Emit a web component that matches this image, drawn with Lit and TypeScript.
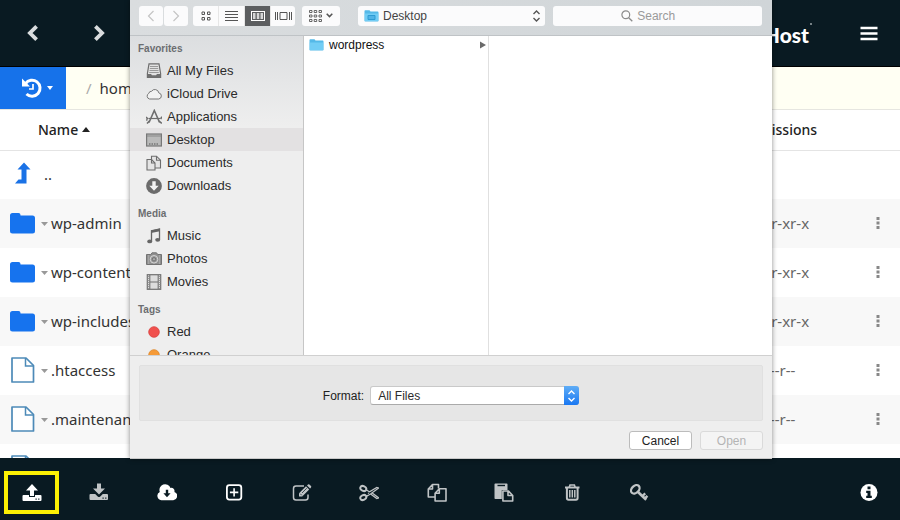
import { LitElement, html, svg, css, nothing } from "lit";
import { customElement, property, state } from "lit/decorators.js";
import { classMap } from "lit/directives/class-map.js";

const chevronLeft = svg`<path d="M8.800 2 L2.700 8 L8.800 14" fill="none" stroke="currentColor" stroke-width="3.500"/>`;
const chevronRight = svg`<path d="M2.200 2 L8.300 8 L2.200 14" fill="none" stroke="currentColor" stroke-width="3.500"/>`;

/* Bottom bar icons, drawn on a 20 x 20 grid */
const actionIcons: Record<string, unknown> = {
  upload: svg`<path fill="currentColor" d="M10 1 L16 7.500 H12 V13 H8 V7.500 H4 Z"/>
    <path fill="currentColor" d="M1.500 12 H7 V13.500 Q7 14 7.500 14 H12.500 Q13 14 13 13.500 V12 H18.500 Q19.500 12 19.500 13 V17 Q19.500 18 18.500 18 H1.500 Q.5 18 .5 17 V13 Q.5 12 1.500 12 Z"/>
    <path fill="#091a22" d="M13.500 15.500h1.200v1.200h-1.200zM16.200 15.500h1.200v1.200h-1.200z"/>`,
  download: svg`<path fill="currentColor" d="M8 .5 H12 V5.500 H16 L10 11.500 L4 5.500 H8 Z"/>
    <path fill="currentColor" d="M1.500 11 H6.200 L9 13.700 Q10 14.500 11 13.700 L13.800 11 H18 Q19 11 19 12 V16 Q19 17 18 17 H1.500 Q.5 17 .5 16 V12 Q.5 11 1.500 11 Z"/>
    <path fill="#091a22" d="M13.500 14.500h1.200v1.200h-1.200zM16.200 14.500h1.200v1.200h-1.200z"/>`,
  cloud: svg`<path fill="currentColor" d="M4.300 17.200 A4.400 4.400 0 0 1 2.800 8.900 A5.700 5.700 0 0 1 13.500 4.900 A3.200 3.200 0 0 1 17.400 8.900 A4.300 4.300 0 0 1 16.300 17.200 Z"/>
    <path fill="#091a22" d="M8.800 6.700 H11.200 V10.300 H13.600 L10 14.200 L6.400 10.300 H8.800 Z"/>`,
  add: svg`<rect x="2.900" y="2.200" width="14.400" height="14.400" rx="2.500" fill="none" stroke="currentColor" stroke-width="1.800"/>
    <path d="M10.100 5.200 V13.600 M5.900 9.400 H14.300" stroke="currentColor" stroke-width="1.600"/>`,
  edit: svg`<path d="M16 11.500 V14.500 Q16 17 13.500 17 H4 Q1.500 17 1.500 14.500 V5.500 Q1.500 3 4 3 H12" fill="none" stroke="currentColor" stroke-width="1.500"/>
    <path fill="currentColor" d="M7 13.500 V10.300 L14 3.300 L17.200 6.500 L10.200 13.500 Z M15 2.400 L16 1.500 Q16.700 .9 17.400 1.500 L19 3.100 Q19.600 3.800 19 4.500 L18.100 5.500 Z"/>
    <path d="M8.200 10.700 L9.800 12.300 M10 10 L14.800 5.200" stroke="#091a22" stroke-width=".7"/>`,
  cut: svg`<g fill="none" stroke="currentColor"><ellipse cx="4.300" cy="5.500" rx="3.100" ry="2.300" transform="rotate(25 4.300 5.500)" stroke-width="2"/>
    <ellipse cx="4.300" cy="14.500" rx="3.100" ry="2.300" transform="rotate(-25 4.300 14.500)" stroke-width="2"/>
    <path stroke-width="1.200" d="M7 6.700 L10.500 8.800 L17.800 4.500 L19.700 5.100 L11.500 10.900 L7.300 13.400 M7 13 L8.500 12.200 M9 9.900 L10 10.500 M11.600 10.900 L17.800 15.500 L19.700 14.900 L12.500 9.400"/></g>`,
  copy: svg`<g fill="none" stroke="currentColor" stroke-width="1.600" stroke-linejoin="round"><path d="M8 14 H1.300 V6 L5.500 1.500 H11.500 V5.500 M1.300 6 H5.500 V1.500"/>
    <path d="M12.300 5.700 H19 V18 H8.100 V10.200 Z M8.100 10.200 H12.300 V5.700"/></g>`,
  paste: svg`<path fill="currentColor" d="M1.300 .5 H12.700 Q13.500 .5 13.500 1.300 V7 H7.800 V16 H1.300 Q.5 16 .5 15.200 V1.300 Q.5 .5 1.300 .5 Z"/><path fill="#091a22" d="M3.500 1.800 H11 V3.200 H3.500 Z"/>
    <path d="M8.900 8 H14.500 L18.700 12.500 V18 H8.900 Z M14 8 V12.500 H18.600" fill="#091a22" stroke="currentColor" stroke-width="1.600" stroke-linejoin="round"/>`,
  trash: svg`<g fill="none" stroke="currentColor"><path stroke-width="2" d="M3 4.500 H17.500"/><path stroke-width="1.600" d="M7.200 4.500 L8 2 H12.400 L13.200 4.500"/>
    <path stroke-width="2" d="M4.900 5 V15 Q4.900 16.700 6.500 16.700 H14 Q15.600 16.700 15.600 15 V5"/><path stroke-width="1.500" d="M7.800 7 V14.500 M10.300 7 V14.500 M12.800 7 V14.500"/></g>`,
  key: svg`<g fill="none" stroke="currentColor"><ellipse cx="6.300" cy="6.300" rx="4.900" ry="3.500" transform="rotate(-45 6.300 6.300)" stroke-width="2.300"/>
    <path stroke-width="2.600" d="M9 9 L17.200 16.800"/><path stroke-width="2.400" d="M13.500 13 L16.200 10.400 M16 15.300 L18.400 12.900"/></g>`,
  info: svg`<circle cx="10" cy="9.500" r="8.500" fill="currentColor"/><path fill="#091a22" d="M8.500 3.600 H11.500 V6.200 H8.500 Z M7.200 7.800 H11.500 V12.800 H12.800 V14.900 H7.200 V12.800 H8.500 V9.900 H7.200 Z"/>`,
};

/* Sidebar icons, drawn on a 16 x 16 grid */
const placeIcons: Record<string, unknown> = {
  files: svg`<path d="M3 .8 H13 L14.600 10.500 V14.500 H1.400 V10.500 Z" fill="#e2e2e2" stroke="#6d6d6d" stroke-width="1.200"/>
    <path d="M4 3.500 H12 M3.800 5.500 H12.200 M3.500 7.500 H12.500 M3.200 9.500 H12.800" stroke="#999" stroke-width="1"/><path d="M1.500 11 H5 L6 12.200 H10 L11 11 H14.500 V14.500 H1.500 Z" fill="#707070"/>`,
  cloud: svg`<path d="M3.500 13 A3 3 0 0 1 2.800 7.400 A2.600 2.600 0 0 1 5.500 5.300 A4 4 0 0 1 12.800 6.900 A3.100 3.100 0 0 1 12.800 13 Z" fill="#f2f2f2" stroke="#777" stroke-width="1"/>`,
  apps: svg`<g fill="none" stroke="#6d6d6d" stroke-width="1.600"><path d="M3 13.500 L8.300 1.500 L13.600 13.500"/><path d="M2.500 9.500 H14" stroke-width="1.200"/><path d="M0 8 L2 10 M0 11 L1.600 10.800 M1 14.500 L3.500 12 M14.600 10 L16 7.700 M15.800 14.500 L13 12"/></g>`,
  desktop: svg`<rect x=".6" y="2" width="14.800" height="12" fill="#bababa" stroke="#777" stroke-width="1.200"/><path d="M1 4 H15" stroke="#888"/><path d="M3 12 H13" stroke="#777" stroke-width="1.500" stroke-dasharray="1.500 1"/>`,
  documents: svg`<g fill="#e4e4e4" stroke="#6d6d6d" stroke-width="1.100"><path d="M5.500 11.500 V1.200 H10.500 L14.500 5.200 V13 H9"/><path d="M1 4.500 H5.500 L9 8 V15 H1 Z"/><path fill="none" d="M5.500 4.500 V8 H9 M10.500 1.200 V5.200 H14.500"/></g>`,
  downloads: svg`<circle cx="8" cy="8" r="7.900" fill="#6b6b6b"/><path fill="#f4f4f4" d="M6.300 3.200 H9.700 V7.800 H12.700 L8 12.800 L3.300 7.800 H6.300 Z"/>`,
  music: svg`<path d="M5.500 13 V2.800 L13.500 1 V11.500" fill="none" stroke="#666" stroke-width="1.300"/><path d="M5 2.400 L14 .5 V3.200 L5 5 Z" fill="#666"/><ellipse cx="3.700" cy="13.400" rx="2.500" ry="1.900" fill="#666"/><ellipse cx="11.700" cy="11.800" rx="2.500" ry="1.900" fill="#666"/>`,
  photos: svg`<path d="M.5 3.500 H4.800 L6 1.800 H10.500 L11.700 3.500 H15.500 V13.500 H.5 Z" fill="#8f8f8f" stroke="#737373"/><circle cx="8" cy="8.300" r="3.800" fill="#999" stroke="#ddd" stroke-width=".9"/><circle cx="8" cy="8.300" r="1.700" fill="#aaa" stroke="#666" stroke-width=".8"/><path d="M2.700 4V13M13.400 4V13" stroke="#aaa"/>`,
  movies: svg`<rect x="1.300" y=".7" width="13.400" height="14.600" fill="#ddd" stroke="#707070" stroke-width="1.200"/><path d="M3.800 1 V15 M12.200 1 V15 M4 8 H12" stroke="#707070" stroke-width="1.100"/><path d="M2.400 2 V15 M13.600 2 V15" stroke="#999" stroke-width="1.200" stroke-dasharray="1 1"/>`,
  red: svg`<circle cx="8" cy="8" r="5.300" fill="#f0504d" stroke="#d94340" stroke-width=".8"/>`,
  orange: svg`<circle cx="8" cy="8" r="5.300" fill="#f59a37" stroke="#dd8526" stroke-width=".8"/>`,
};

const skyFolder = svg`<path d="M.5 2 Q.5 1.200 1.300 1.200 H5.500 L6.500 2.600 H13.700 Q14.500 2.600 14.500 3.400 V11.800 Q14.500 12.500 13.700 12.500 H1.300 Q.5 12.500 .5 11.800 Z" fill="#55b9e8"/><path d="M.8 4.500 H14.200 V12 H.8 Z" fill="#72cdf5"/>`;

interface Entry { name: string; kind: "up" | "folder" | "file"; mode: string; }

const entries: Entry[] = [
  { name: "..", kind: "up", mode: "" },
  { name: "wp-admin", kind: "folder", mode: "drwxr-xr-x" },
  { name: "wp-content", kind: "folder", mode: "drwxr-xr-x" },
  { name: "wp-includes", kind: "folder", mode: "drwxr-xr-x" },
  { name: ".htaccess", kind: "file", mode: "-rw-r--r--" },
  { name: ".maintenance", kind: "file", mode: "-rw-r--r--" },
  { name: "", kind: "file", mode: "" },
];

const places = [
  { title: "Favorites", items: [["files", "All My Files"], ["cloud", "iCloud Drive"], ["apps", "Applications"], ["desktop", "Desktop"], ["documents", "Documents"], ["downloads", "Downloads"]] },
  { title: "Media", items: [["music", "Music"], ["photos", "Photos"], ["movies", "Movies"]] },
  { title: "Tags", items: [["red", "Red"], ["orange", "Orange"]] },
];

const actions: [string, string, boolean][] = [
  ["upload", "Upload", true], ["download", "Download", false], ["cloud", "Fetch from cloud", true],
  ["add", "New", true], ["edit", "Edit", false], ["cut", "Cut", false], ["copy", "Copy", false],
  ["paste", "Paste", false], ["trash", "Delete", false], ["key", "Change permissions", false],
];

const reset = css`
  * { box-sizing: border-box; }
  button, select, input { font: inherit; color: inherit; margin: 0; padding: 0; border: 0; background: none; border-radius: 0; }
  button { display: flex; align-items: center; justify-content: center; }
  svg { display: block; flex: none; }
  ul { list-style: none; margin: 0; padding: 0; }
`;

@customElement("file-table")
class FileTable extends LitElement {
  static styles = [reset, css`
    :host { display: block; font: 15px/18px "Noto Sans", sans-serif; color: #333; background: #fff; }
    table { width: 100%; table-layout: fixed; border-collapse: collapse; }
    th { height: 40px; padding: 0; text-align: left; font-size: 14px; font-weight: 500; color: #222; border-bottom: 1px solid #e4e4e4; }
    .sort { padding-left: 38px; gap: 4px; }
    .mode-col { width: 128px; }
    .menu-col { width: 36px; }
    td { height: 49px; padding: 0 0 2px; white-space: nowrap; }
    tr:nth-child(even) td { background: #f8f8f8; }
    .mode { color: #666; }
    .entry { display: flex; align-items: center; padding-left: 10px; }
    .entry a { color: inherit; text-decoration: none; }
    .caret { width: 15px; height: 20px; padding: 2px 0 0 2px; }
    .parent { padding-left: 8px; }
    .more { width: 28px; height: 28px; }
  `];

  private icon(kind: Entry["kind"]) {
    if (kind === "up")
      return html`<svg width="26" height="26" viewBox="0 0 26 26"><path fill="#1a72e6" d="M14 1.500 L20.500 8.500 H16.500 V22.500 H5 L8.500 18.500 H11.500 V8.500 H7.500 Z"/></svg>`;
    if (kind === "folder")
      return html`<svg width="26" height="26" viewBox="0 0 26 26"><path fill="#1673ee" d="M2.500 3 H8.500 Q10.500 3 10.500 5 V5.500 H22.500 Q25 5.500 25 8 V21 Q25 23.500 22.500 23.500 H2.500 Q0 23.500 0 21 V5.500 Q0 3 2.500 3 Z"/></svg>`;
    return html`<svg width="26" height="26" viewBox="0 0 26 26"><path fill="#fff" stroke="#4d8ab8" stroke-width="1.700" stroke-linejoin="round" d="M2 1 H16 L23.500 8.500 V25 H2 Z"/><path fill="none" stroke="#4d8ab8" stroke-width="1.500" d="M15.500 1 V9 H23.500"/></svg>`;
  }

  render() {
    return html`<table>
      <colgroup><col><col class="mode-col"><col class="menu-col"></colgroup>
      <thead><tr>
        <th scope="col"><button class="sort">Name
          <svg width="8" height="5" viewBox="0 0 8 5"><path fill="#222" d="M4 0 L8 5 H0 Z"/></svg></button></th>
        <th scope="col">Permissions</th>
        <th scope="col"></th>
      </tr></thead>
      <tbody>${entries.map((e) => html`<tr>
        <td><div class="entry">${this.icon(e.kind)}
          ${e.name && e.kind !== "up" ? html`<button class="caret" aria-label="Options"><svg width="7" height="4" viewBox="0 0 7 4"><path fill="#999" d="M0 0 H7 L3.500 4 Z"/></svg></button>` : nothing}
          <a class=${classMap({ parent: e.kind === "up" })} href="#">${e.name}</a>
        </div></td>
        <td class="mode">${e.mode}</td>
        <td>${e.mode ? html`<button class="more" aria-label="More"><svg width="4" height="14" viewBox="0 0 4 14"><path fill="#888" d="M.5 1h3v3h-3zM.5 5.500h3v3h-3zM.5 10h3v3h-3z"/></svg></button>` : nothing}</td>
      </tr>`)}</tbody>
    </table>`;
  }
}

@customElement("open-dialog")
class OpenDialog extends LitElement {
  @state() private place = "Desktop";

  static styles = [reset, css`
    :host { display: flex; flex-direction: column; font: 12px/16px "Liberation Sans", Arial, sans-serif; color: #2b2b2b; background: #eeeeee; box-shadow: 0 0 5px rgba(0, 0, 0, .45); border-bottom: 1px solid #c8c8c8; }
    .tools { flex: none; display: flex; align-items: center; height: 36px; padding: 0 10px 4px 9px; background: linear-gradient(90deg, #dadddf, #d0d5d8); border-bottom: 1px solid #bfc3c6; }
    .tools button, .where, .search { height: 20px; background: #fbfbfc; border-radius: 3px; }
    .history { display: flex; gap: 1px; color: #c4c4c4; }
    .history button { width: 24px; }
    .views { display: flex; margin-left: 5px; border-radius: 3px; overflow: hidden; color: #555; }
    .views button { width: 26px; border-radius: 0; border-right: 1px solid #e6e6e6; }
    .views button:last-child { width: 24px; border: 0; }
    .views button.on { background: #5c5e60; color: #fff; }
    .tools .arrange { margin-left: 7px; width: 38px; gap: 4px; color: #555; }
    .where { position: relative; display: flex; align-items: center; margin-left: 18px; flex: 187 1 0; }
    .where select { appearance: none; width: 100%; height: 20px; padding-left: 25px; color: #444; }
    .where svg { position: absolute; pointer-events: none; }
    .where .icon { left: 6px; }
    .where .arrows { right: 4px; color: #555; }
    .search { flex: 210 1 0; margin-left: 8px; display: flex; align-items: center; justify-content: center; gap: 4px; color: #8b8b8b; }
    .search input { width: 60px; outline: 0; }
    .search input::placeholder { color: #9a9a9a; opacity: 1; }
    .search svg { margin-left: 4px; }
    .body { flex: 1; min-height: 0; display: flex; background: #fff; border-bottom: 1px solid #d0d0d0; overflow: hidden; }
    .places { flex: none; width: 174px; padding-top: 3px; overflow: hidden; border-right: 1px solid #c6c6c6; background: linear-gradient(#dcdee0, #eeeeee 90px); display: flex; flex-direction: column; gap: 7px; }
    h2 { margin: 0; padding-left: 8px; font-size: 10px; line-height: 20px; color: #6b6d70; }
    .places button { width: 100%; height: 23px; padding-left: 16px; justify-content: flex-start; gap: 5px; }
    .places .label { font-size: 13px; }
    .places button.on { background: #e3e1e2; }
    .column { flex: none; width: 185px; border-right: 1px solid #e0e0e0; }
    .column button { width: 100%; height: 18px; padding: 0 2px 0 5px; gap: 5px; color: #111; }
    .column .label { flex: 1; text-align: left; }
    .options { flex: none; margin: 9px 9px 0; height: 56px; display: flex; align-items: center; justify-content: center; gap: 6px; background: #e6e6e6; border: 1px solid #e0e0e0; border-radius: 2px; padding-top: 5px; }
    .options label { color: #222; }
    .format { position: relative; width: 209px; height: 19px; }
    .format select { display: block; appearance: none; width: 100%; height: 19px; padding-left: 7px; background: #fff; border: 1px solid #c9c9c9; border-bottom-color: #aaa; border-radius: 3px; }
    .format .knob { position: absolute; right: 0; top: 0; width: 15px; height: 19px; display: grid; place-items: center; background: linear-gradient(#5fadf6, #1a78f2); border-radius: 0 3px 3px 0; pointer-events: none; }
    .buttons { flex: none; display: flex; justify-content: flex-end; gap: 8px; padding: 10px 9px 8px; }
    .buttons button { width: 63px; height: 19px; background: #fff; border: 1px solid #bcbcbc; border-radius: 3px; color: #222; }
    .buttons button:disabled { background: #f4f4f4; border-color: #dadada; color: #b4b4b4; }
  `];

  render() {
    const arrows = svg`<path d="M1.500 4 L4.500 1 L7.500 4 M1.500 8 L4.500 11 L7.500 8" fill="none" stroke="currentColor" stroke-width="1.400"/>`;
    return html`
      <div class="tools">
        <div class="history">
          <button aria-label="Back"><svg width="8" height="12" viewBox="0 0 8 12"><path d="M6.500 1 L1.500 6 L6.500 11" fill="none" stroke="currentColor" stroke-width="1.200"/></svg></button>
          <button aria-label="Forward"><svg width="8" height="12" viewBox="0 0 8 12"><path d="M1.500 1 L6.500 6 L1.500 11" fill="none" stroke="currentColor" stroke-width="1.200"/></svg></button>
        </div>
        <div class="views">
          <button aria-label="Icons"><svg width="10" height="10" viewBox="0 0 10 10"><path d="M1 1h2.500v2.500H1zM6.500 1H9v2.500H6.500zM1 6.500h2.500V9H1zM6.500 6.500H9V9H6.500z" fill="none" stroke="currentColor"/></svg></button>
          <button aria-label="List"><svg width="13" height="10" viewBox="0 0 13 10"><path d="M0 .5H13M0 3.500H13M0 6.500H13M0 9.500H13" stroke="currentColor"/></svg></button>
          <button class="on" aria-label="Columns"><svg width="14" height="10" viewBox="0 0 14 10"><rect x=".5" y=".5" width="13" height="9" fill="none" stroke="currentColor"/><path d="M2 2h2.500v6H2zM5.800 2h2.500v6H5.800zM9.500 2H12v6H9.500z" fill="currentColor" opacity=".75"/></svg></button>
          <button aria-label="Cover flow"><svg width="17" height="10" viewBox="0 0 17 10"><path d="M.5 1V9M2.500 1V9M14.500 1V9M16.500 1V9M5 1.500H12V8.500H5z" fill="none" stroke="currentColor"/></svg></button>
        </div>
        <button class="arrange" aria-label="Arrange">
          <svg width="13" height="12" viewBox="0 0 13 12"><path d="M.5 .5h2.500v2h-2.500zM5.200 .5h2.500v2h-2.500zM10 .5h2.500v2h-2.500zM.5 5h2.500v2h-2.500zM5.200 5h2.500v2h-2.500zM10 5h2.500v2h-2.500zM.5 9.500h2.500v2h-2.500zM5.200 9.500h2.500v2h-2.500zM10 9.500h2.500v2h-2.500z" fill="none" stroke="currentColor" stroke-width=".9"/></svg>
          <svg width="7" height="5" viewBox="0 0 7 5"><path d="M.7 .7 L3.500 3.600 L6.300 .7" fill="none" stroke="currentColor" stroke-width="1.500"/></svg>
        </button>
        <div class="where">
          <svg class="icon" width="15" height="14" viewBox="0 0 15 14">${skyFolder}<path d="M4 6.500H11V10.500H4z" fill="#4fb3e6" stroke="#2e9bd3"/></svg>
          <select aria-label="Location"><option>Desktop</option></select>
          <svg class="arrows" width="9" height="12" viewBox="0 0 9 12">${arrows}</svg>
        </div>
        <label class="search">
          <svg width="12" height="12" viewBox="0 0 12 12"><circle cx="4.800" cy="4.800" r="3.900" fill="none" stroke="currentColor" stroke-width="1.200"/><path d="M7.700 7.700 L11.300 11.300" stroke="currentColor" stroke-width="1.300"/></svg>
          <input type="search" placeholder="Search" aria-label="Search">
        </label>
      </div>
      <div class="body">
        <nav class="places">${places.map((g) => html`<section>
          <h2>${g.title}</h2>
          <ul>${g.items.map(([icon, name]) => html`<li><button class=${classMap({ on: name === this.place })} @click=${() => (this.place = name)}>
            <svg width="16" height="16" viewBox="0 0 16 16">${placeIcons[icon]}</svg><span class="label">${name}</span></button></li>`)}</ul>
        </section>`)}</nav>
        <div class="column"><button>
          <svg width="15" height="14" viewBox="0 0 15 14">${skyFolder}</svg><span class="label">wordpress</span>
          <svg width="6" height="8" viewBox="0 0 6 8"><path d="M0 .5 L6 4 L0 7.500 Z" fill="#6a6a6a"/></svg>
        </button></div>
      </div>
      <div class="options">
        <label for="format">Format:</label>
        <div class="format"><select id="format"><option>All Files</option></select>
          <span class="knob"><svg width="9" height="12" viewBox="0 0 9 12" color="#fff">${arrows}</svg></span></div>
      </div>
      <div class="buttons"><button>Cancel</button><button disabled>Open</button></div>`;
  }
}

@customElement("action-bar")
class ActionBar extends LitElement {
  @property() marked = "upload";

  static styles = [reset, css`
    :host { display: flex; align-items: center; height: 62px; padding-top: 7px; background: #091a22; color: #fff; }
    ul { flex: 1; display: flex; }
    li { flex: none; width: 7.5vw; }
    button { width: 55px; height: 43px; margin-left: 4px; color: #c0c4c6; }
    .strong { color: #fff; }
    .marked { border: 4px solid #fdf104; }
    .info { margin: 0 4px 0 0; }
  `];

  render() {
    return html`<ul>${actions.map(([id, label, strong]) => html`<li>
        <button class=${classMap({ strong, marked: id === this.marked })} aria-label=${label}><svg width="20" height="20" viewBox="0 0 20 20">${actionIcons[id]}</svg></button>
      </li>`)}</ul>
      <button class="info strong" aria-label="Info"><svg width="20" height="20" viewBox="0 0 20 20">${actionIcons.info}</svg></button>`;
  }
}

@customElement("app-root")
class AppRoot extends LitElement {
  static styles = [reset, css`
    :host { display: flex; flex-direction: column; height: 100vh; overflow: hidden; background: #fff; font: 15px/20px "Noto Sans", sans-serif; color: #333; }
    .stage { position: relative; flex: 1; min-height: 0; display: flex; flex-direction: column; }
    .list { flex: 1; min-height: 0; overflow: hidden; }
    header { flex: none; display: flex; align-items: center; height: 67px; padding: 0 13px 0 15px; background: #091a22; color: #d9dcde; border-bottom: 1px solid #000; }
    .nav { width: 36px; height: 36px; }
    .next { margin-left: 30px; }
    .brand { margin-left: auto; font: 900 21px/24px Lato, sans-serif; color: #fff; display: flex; padding-top: 4px; }
    .dot { width: 2px; height: 2px; margin-left: 1px; border-radius: 1px; background: #9aa3a7; }
    .menu { margin-left: 39px; width: 36px; height: 36px; color: #fff; }
    .path { flex: none; display: flex; align-items: stretch; height: 43px; background: #fffff3; border-bottom: 1px solid #e6e6e0; }
    .recent { width: 66px; background: #1672ea; color: #fff; gap: 4px; padding-left: 7px; }
    .crumbs { display: flex; align-items: center; gap: 8px; padding-left: 20px; }
    .slash { color: #aaa; }
    .crumbs a { color: inherit; text-decoration: none; }
    open-dialog { position: absolute; top: 0; bottom: -1px; left: 130px; right: 128px; }
    action-bar { flex: none; }
  `];

  render() {
    return html`
      <div class="stage">
        <header>
          <button class="nav" aria-label="Back"><svg width="12" height="18" viewBox="0 0 11 16">${chevronLeft}</svg></button>
          <button class="nav next" aria-label="Forward"><svg width="12" height="18" viewBox="0 0 11 16">${chevronRight}</svg></button>
          <div class="brand">Host<span class="dot"></span></div>
          <button class="menu" aria-label="Menu"><svg width="18" height="15" viewBox="0 0 18 15"><path d="M.5 2H17.500M.5 7.500H17.500M.5 13H17.500" stroke="currentColor" stroke-width="2.600"/></svg></button>
        </header>
        <div class="path">
          <button class="recent" aria-label="Recent folders">
            <svg width="22" height="22" viewBox="0 0 22 22"><path d="M4.500 6.600 A8 8 0 1 1 5.500 17" fill="none" stroke="currentColor" stroke-width="3"/><path d="M1 1.500 V9.500 H9 Z" fill="currentColor"/><path d="M12 7 V12 H8" fill="none" stroke="currentColor" stroke-width="1.700"/></svg>
            <svg width="6" height="4" viewBox="0 0 6 4"><path fill="currentColor" d="M0 0 H6 L3 4 Z"/></svg>
          </button>
          <div class="crumbs"><span class="slash">/</span><a href="#">home</a></div>
        </div>
        <file-table class="list"></file-table>
        <open-dialog></open-dialog>
      </div>
      <action-bar></action-bar>`;
  }
}
